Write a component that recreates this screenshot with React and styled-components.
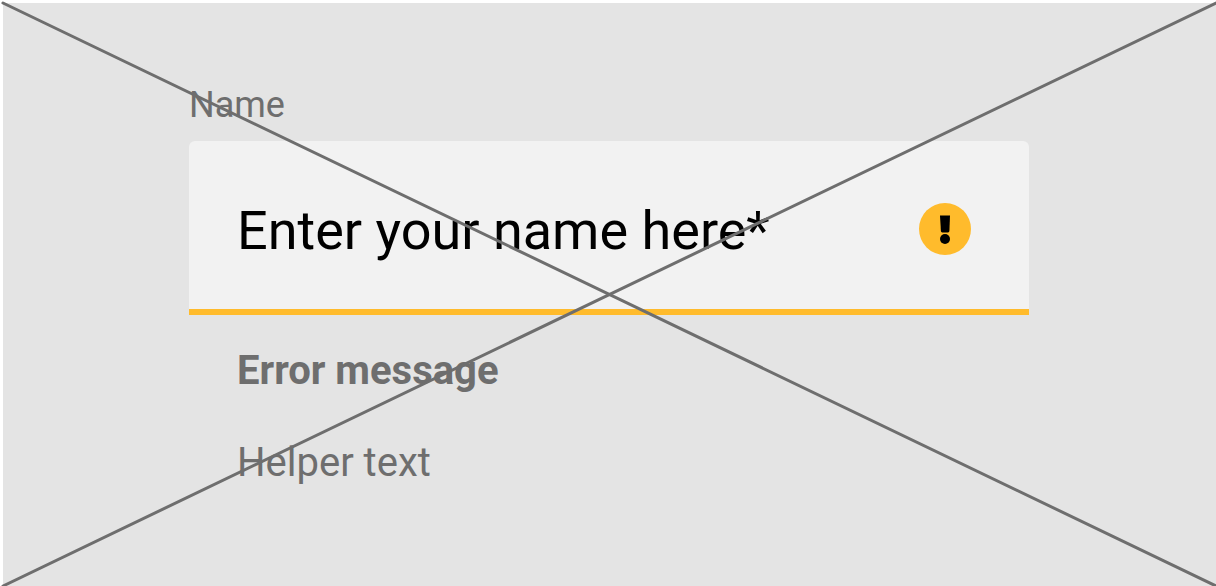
import React from "react";
import styled, { createGlobalStyle } from "styled-components";

const GlobalStyle = createGlobalStyle`
  *, *::before, *::after { box-sizing: border-box; }
  body {
    margin: 0;
    background: #ffffff;
    font-family: Roboto, "Liberation Sans", Arial, sans-serif;
  }
`;

const Page = styled.main`
  min-height: 100vh;
  padding: 3px 0 0 3px;
  display: flex;
`;

const Panel = styled.section`
  position: relative;
  flex: 1;
  min-width: 0;
  padding: 78px 187px 72px 186px;
  background: #e4e4e4;
`;

const Field = styled.div`
  display: flex;
  flex-direction: column;
`;

const Label = styled.label`
  font-size: 36px;
  line-height: 48px;
  color: #6e6e6e;
`;

const Control = styled.div`
  display: flex;
  align-items: center;
  margin-top: 12px;
  height: 174px;
  padding: 0 58px 0 48px;
  background: #f2f2f2;
  border-bottom: 6px solid #ffbb2c;
  border-radius: 6px 6px 0 0;
`;

const TextInput = styled.input`
  flex: 1;
  min-width: 0;
  height: 72px;
  margin-top: 10px;
  padding: 0;
  border: 0;
  outline: none;
  background: transparent;
  font-family: inherit;
  font-size: 54px;
  color: #000000;

  &::placeholder {
    color: #000000;
    opacity: 1;
  }
`;

const StatusIcon = styled.svg`
  flex: none;
  width: 52px;
  height: 52px;
  margin-top: 8px;
`;

const Message = styled.p`
  margin: ${(p) => (p.$strong ? "32px 0 0" : "44px 0 0")};
  padding-left: 48px;
  font-size: 40px;
  line-height: 48px;
  font-weight: ${(p) => (p.$strong ? 700 : 400)};
  color: #6e6e6e;
`;

const Strike = styled.svg`
  position: absolute;
  inset: 0;
  width: 100%;
  height: 100%;
  overflow: visible;
  pointer-events: none;
`;

function WarningIcon() {
  return (
    <StatusIcon viewBox="0 0 52 52" role="img" aria-label="Warning">
      <circle cx="26" cy="26" r="26" fill="#ffbb2c" />
      <path d="M21 12.5H31L30.4 28Q30.3 29.4 29 29.4H23.2Q22 29.4 21.9 28Z" />
      <circle cx="26" cy="36" r="5" />
    </StatusIcon>
  );
}

export default function App() {
  return (
    <>
      <GlobalStyle />
      <Page>
        <Panel>
          <Field>
            <Label htmlFor="name">Name</Label>
            <Control>
              <TextInput
                id="name"
                type="text"
                placeholder="Enter your name here*"
                aria-describedby="name-error name-help"
              />
              <WarningIcon />
            </Control>
            <Message id="name-error" $strong>
              Error message
            </Message>
            <Message id="name-help">Helper text</Message>
          </Field>
          <Strike aria-hidden="true" stroke="#6e6e6e" strokeWidth="3" strokeLinecap="round">
            <line x1="0" y1="0" x2="100%" y2="100%" />
            <line x1="0" y1="100%" x2="100%" y2="0" />
          </Strike>
        </Panel>
      </Page>
    </>
  );
}
